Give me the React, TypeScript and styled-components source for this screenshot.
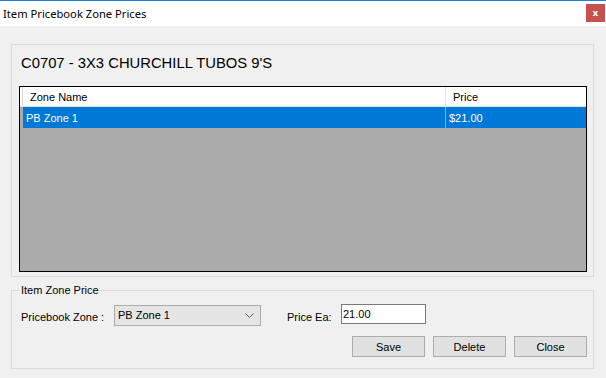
import React from "react";
import styled, { createGlobalStyle } from "styled-components";

const Global = createGlobalStyle`
  html, body { margin: 0; padding: 0; }
  body { font-family: "Liberation Sans", Arial, sans-serif; background: #f0f0f0; }
  * { box-sizing: border-box; }
`;

const Frame = styled.div`
  width: 606px;
  height: 378px;
  background: #f0f0f0;
  border-top: 1px solid #1c7fd6;
  display: flex;
  flex-direction: column;
  overflow: hidden;
`;

const TitleBar = styled.div`
  height: 25px;
  background: #ffffff;
  display: flex;
  align-items: center;
  justify-content: space-between;
  padding-left: 3px;
  padding-right: 1px;
`;

const TitleText = styled.span`
  font-family: "Noto Sans", "Open Sans", sans-serif;
  font-size: 11.2px;
  color: #000;
`;

const CloseBox = styled.div`
  width: 19px;
  height: 18px;
  background: #c75050;
  color: #fff;
  font-family: "DejaVu Sans", sans-serif;
  font-weight: bold;
  font-size: 9px;
  display: flex;
  align-items: center;
  justify-content: center;
  margin-top: -1px;
`;

const Body = styled.div`
  flex: 1;
  padding: 18px 12px 0 11px;
  display: flex;
  flex-direction: column;
`;

const ListGroup = styled.div`
  height: 233px;
  border: 1px solid #dcdcdc;
  padding: 10px 0 0 7px;
  display: flex;
  flex-direction: column;
`;

const Heading = styled.div`
  font-size: 14.8px;
  line-height: 17px;
  color: #000;
  padding-left: 2px;
  margin-bottom: 14px;
`;

const Grid = styled.div`
  width: 568px;
  height: 186px;
  border: 1px solid #000;
  background: #ababab;
  display: flex;
  flex-direction: column;
`;

const HeaderRow = styled.div`
  display: flex;
  height: 20px;
  background: #fff;
  border-bottom: 1px solid #e3e3e3;
`;

const RowEdge = styled.div<{ $header?: boolean }>`
  width: 3px;
  flex: none;
  background: ${(p) => (p.$header ? "#fff" : "#ababab")};
  border-right: 1px solid ${(p) => (p.$header ? "#d8d8d8" : "#ababab")};
`;

const HeaderCell = styled.div<{ $w?: number }>`
  ${(p) => (p.$w ? `width: ${p.$w}px; flex: none;` : "flex: 1;")}
  font-size: 11px;
  color: #000;
  display: flex;
  align-items: center;
  padding-left: 7px;
  border-right: 1px solid #e3e3e3;
  &:last-child { border-right: none; }
`;

const DataRow = styled.div`
  display: flex;
  height: 21px;
`;

const DataCell = styled.div<{ $w?: number }>`
  ${(p) => (p.$w ? `width: ${p.$w}px; flex: none;` : "flex: 1;")}
  background: #0078d7;
  color: #fff;
  font-size: 11px;
  display: flex;
  align-items: center;
  padding-left: 3px;
  border-right: 1px solid #7fb5e6;
  &:last-child { border-right: none; }
`;

const ZoneGroup = styled.fieldset`
  margin: 7px 0 0 0;
  padding: 7px 6px 0 9px;
  height: 85px;
  border: 1px solid #dcdcdc;
  min-width: 0;
`;

const Legend = styled.legend`
  font-size: 11px;
  line-height: 13px;
  padding: 0 1px;
  margin-left: -1px;
  color: #000;
`;

const FieldRow = styled.div`
  display: flex;
  align-items: center;
  height: 22px;
`;

const Label = styled.span<{ $w: number }>`
  width: ${(p) => p.$w}px;
  flex: none;
  font-size: 11px;
  color: #000;
  padding-top: 4px;
`;

const Combo = styled.div`
  width: 147px;
  height: 21px;
  background: #e5e5e5;
  border: 1px solid #acacac;
  display: flex;
  align-items: center;
  justify-content: space-between;
  padding: 0 6px 0 3px;
  font-size: 11px;
  color: #000;
  margin-right: 26px;
`;

const TextBox = styled.div`
  width: 85px;
  height: 20px;
  background: #fff;
  border: 1px solid #7a7a7a;
  font-size: 11px;
  color: #000;
  display: flex;
  align-items: center;
  padding-left: 1px;
  margin-top: -2px;
`;

const ButtonRow = styled.div`
  display: flex;
  justify-content: flex-end;
  gap: 8px;
  margin-top: 10px;
`;

const Button = styled.button`
  width: 73px;
  height: 21px;
  background: #e1e1e1;
  border: 1px solid #adadad;
  font-family: "Liberation Sans", Arial, sans-serif;
  font-size: 11px;
  color: #000;
  padding: 0;
  border-radius: 0;
`;

export default function App() {
  return (
    <>
      <Global />
      <Frame>
        <TitleBar>
          <TitleText>Item Pricebook Zone Prices</TitleText>
          <CloseBox>x</CloseBox>
        </TitleBar>
        <Body>
          <ListGroup>
            <Heading>C0707 - 3X3 CHURCHILL TUBOS 9'S</Heading>
            <Grid>
              <HeaderRow>
                <RowEdge $header />
                <HeaderCell $w={423}>Zone Name</HeaderCell>
                <HeaderCell>Price</HeaderCell>
              </HeaderRow>
              <DataRow>
                <RowEdge />
                <DataCell $w={423}>PB Zone 1</DataCell>
                <DataCell>$21.00</DataCell>
              </DataRow>
            </Grid>
          </ListGroup>
          <ZoneGroup>
            <Legend>Item Zone Price</Legend>
            <FieldRow>
              <Label $w={93}>Pricebook Zone :</Label>
              <Combo>
                <span>PB Zone 1</span>
                <svg width="9" height="5" viewBox="0 0 9 5">
                  <path d="M0.5 0.5 L4.5 4.5 L8.5 0.5" fill="none" stroke="#606060" strokeWidth="1" />
                </svg>
              </Combo>
              <Label $w={54}>Price Ea:</Label>
              <TextBox>21.00</TextBox>
            </FieldRow>
            <ButtonRow>
              <Button>Save</Button>
              <Button>Delete</Button>
              <Button>Close</Button>
            </ButtonRow>
          </ZoneGroup>
        </Body>
      </Frame>
    </>
  );
}
